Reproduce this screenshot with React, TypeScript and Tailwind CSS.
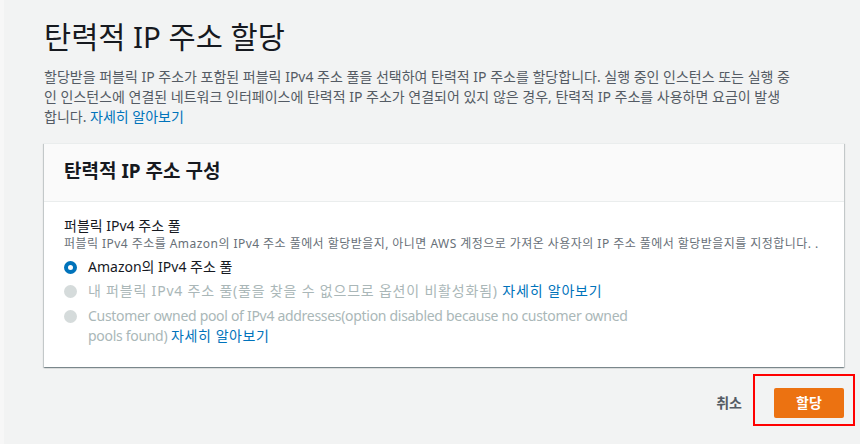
import React from 'react';

const FONT = "font-['Noto_Sans','Noto_Sans_CJK_KR',sans-serif]";

const Radio = ({ checked, disabled }: { checked?: boolean; disabled?: boolean }) => {
  if (checked) {
    return (
      <span className="mt-[4px] h-[13px] w-[13px] shrink-0 rounded-full border-[4px] border-[#0073bb] bg-white" />
    );
  }
  return (
    <span
      className={
        disabled
          ? 'mt-[4px] h-[13px] w-[13px] shrink-0 rounded-full bg-[#d5dbdb]'
          : 'mt-[4px] h-[13px] w-[13px] shrink-0 rounded-full border border-[#aab7b8] bg-white'
      }
    />
  );
};

const PoolOption = ({
  checked,
  disabled,
  className,
  children,
}: {
  checked?: boolean;
  disabled?: boolean;
  className?: string;
  children: React.ReactNode;
}) => (
  <label className="flex gap-[11px]">
    <Radio checked={checked} disabled={disabled} />
    <span
      className={`${
        disabled ? 'text-[14px] leading-[20.5px] text-[#aab7b8]' : 'text-[14px] leading-[20px] text-[#16191f]'
      } ${className ?? ''}`}
    >
      {children}
    </span>
  </label>
);

const LearnMore = () => <a className="text-[#0073bb]">자세히 알아보기</a>;

const App = () => {
  return (
    <div className={`flex h-[444px] w-full bg-[#f2f3f3] ${FONT}`}>
      <div className="w-[4px] shrink-0 bg-[#f7f7f7]" />
      <div className="flex w-[840px] shrink-0 flex-col pl-[40px] pt-[19px]">
        <h1 className="text-[29.5px] leading-[36px] font-normal whitespace-nowrap text-[#16191f]">
          탄력적 IP 주소 할당
        </h1>
        <p className="mt-[12px] text-[14px] leading-[20px] whitespace-nowrap text-[#545b64]">
          할당받을 퍼블릭 IP 주소가 포함된 퍼블릭 IPv4 주소 풀을 선택하여 탄력적 IP 주소를 할당합니다. 실행 중인 인스턴스 또는 실행 중
          <br />
          인 인스턴스에 연결된 네트워크 인터페이스에 탄력적 IP 주소가 연결되어 있지 않은 경우, 탄력적 IP 주소를 사용하면 요금이 발생
          <br />
          합니다. <LearnMore />
        </p>

        <div className="mt-[16px] w-[800px] border-t border-[#eaeded] bg-white shadow-[0_1px_1px_0_rgba(0,28,36,0.3),1px_1px_1px_0_rgba(0,28,36,0.15),-1px_1px_1px_0_rgba(0,28,36,0.15)]">
          <div className="border-b border-[#eaeded] bg-[#fafafa] px-[20px] pt-[15px] pb-[18px]">
            <h2 className="text-[19px] leading-[24px] font-bold text-[#16191f]">탄력적 IP 주소 구성</h2>
          </div>
          <div className="px-[20px] pt-[14px] pb-[20px]">
            <div className="text-[14px] leading-[20px] text-[#16191f]">퍼블릭 IPv4 주소 풀</div>
            <div className="text-[12px] leading-[16px] tracking-[0.45px] whitespace-nowrap text-[#687078]">
              퍼블릭 IPv4 주소를 Amazon의 IPv4 주소 풀에서 할당받을지, 아니면 AWS 계정으로 가져온 사용자의 IP 주소 풀에서 할당받을지를 지정합니다. .
            </div>
            <div className="mt-[5px] flex flex-col gap-[4px]">
              <PoolOption checked>Amazon의 IPv4 주소 풀</PoolOption>
              <PoolOption disabled className="tracking-[0.8px]">
                내 퍼블릭 IPv4 주소 풀(풀을 찾을 수 없으므로 옵션이 비활성화됨) <LearnMore />
              </PoolOption>
              <PoolOption disabled>
                <span className="tracking-[-0.3px]">
                  Customer owned pool of IPv4 addresses(option disabled because no customer owned
                  <br />
                  pools found)
                </span>{' '}
                <span className="tracking-[0.6px]">
                  <LearnMore />
                </span>
              </PoolOption>
            </div>
          </div>
        </div>

        <div className="mt-[21px] flex items-center justify-end">
          <button className="mr-[32px] text-[14px] leading-[20px] font-bold text-[#545b64]">취소</button>
          <div className="relative">
            {/* red highlight box drawn over the primary action */}
            <div className="pointer-events-none absolute -top-[14px] -right-[11px] -bottom-[8px] -left-[21px] border-2 border-[#ff0000]" />
            <button className="h-[30px] w-[70px] rounded-[2px] bg-[#ec7211] text-[14px] font-bold text-white">
              할당
            </button>
          </div>
        </div>
      </div>
    </div>
  );
};

export default App;
